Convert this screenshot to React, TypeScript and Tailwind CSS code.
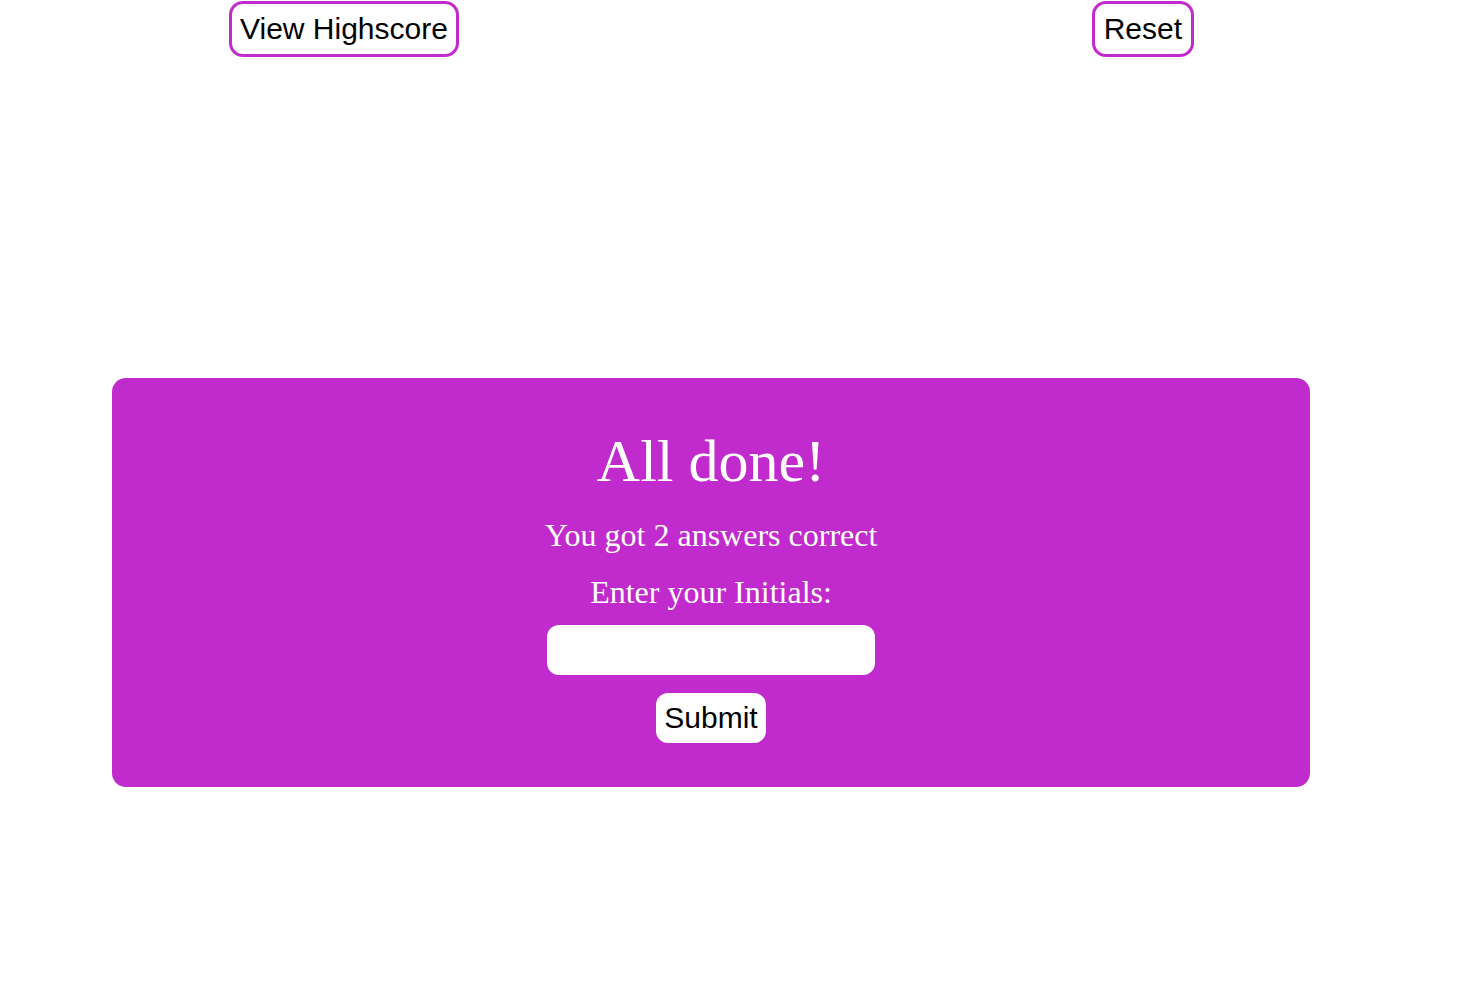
export default function App() {
  return (
    <div className="w-[1462px] h-[1006px] bg-white relative" style={{ fontFamily: '"Liberation Sans", Arial, sans-serif' }}>
      <div className="flex justify-between pl-[229px] pr-[268px] pt-[1px]">
        <button className="border-[3px] border-[#c12acc] rounded-[14px] px-2 py-2 text-[30px] leading-[34px] text-black bg-white">
          View Highscore
        </button>
        <button className="border-[3px] border-[#c12acc] rounded-[14px] px-[9px] py-2 text-[30px] leading-[34px] text-black bg-white">
          Reset
        </button>
      </div>
      <div className="ml-[112px] mt-[321px] w-[1198px] h-[409px] bg-[#c12acc] rounded-[14px] flex flex-col items-center pt-[49px] text-white" style={{ fontFamily: '"Liberation Serif", "Times New Roman", serif' }}>
        <h1 className="text-[60px] leading-[69px] font-normal">All done!</h1>
        <p className="text-[32px] leading-[37px] mt-[21px]">You got 2 answers correct</p>
        <p className="text-[32px] leading-[37px] mt-[20px]">Enter your Initials:</p>
        <input className="mt-[14px] w-[328px] h-[50px] rounded-[12px] bg-white outline-none border-0" />
        <button className="mt-[18px] bg-white rounded-[12px] px-2 py-2 text-[30px] leading-[34px] text-black" style={{ fontFamily: '"Liberation Sans", Arial, sans-serif' }}>
          Submit
        </button>
      </div>
    </div>
  );
}
